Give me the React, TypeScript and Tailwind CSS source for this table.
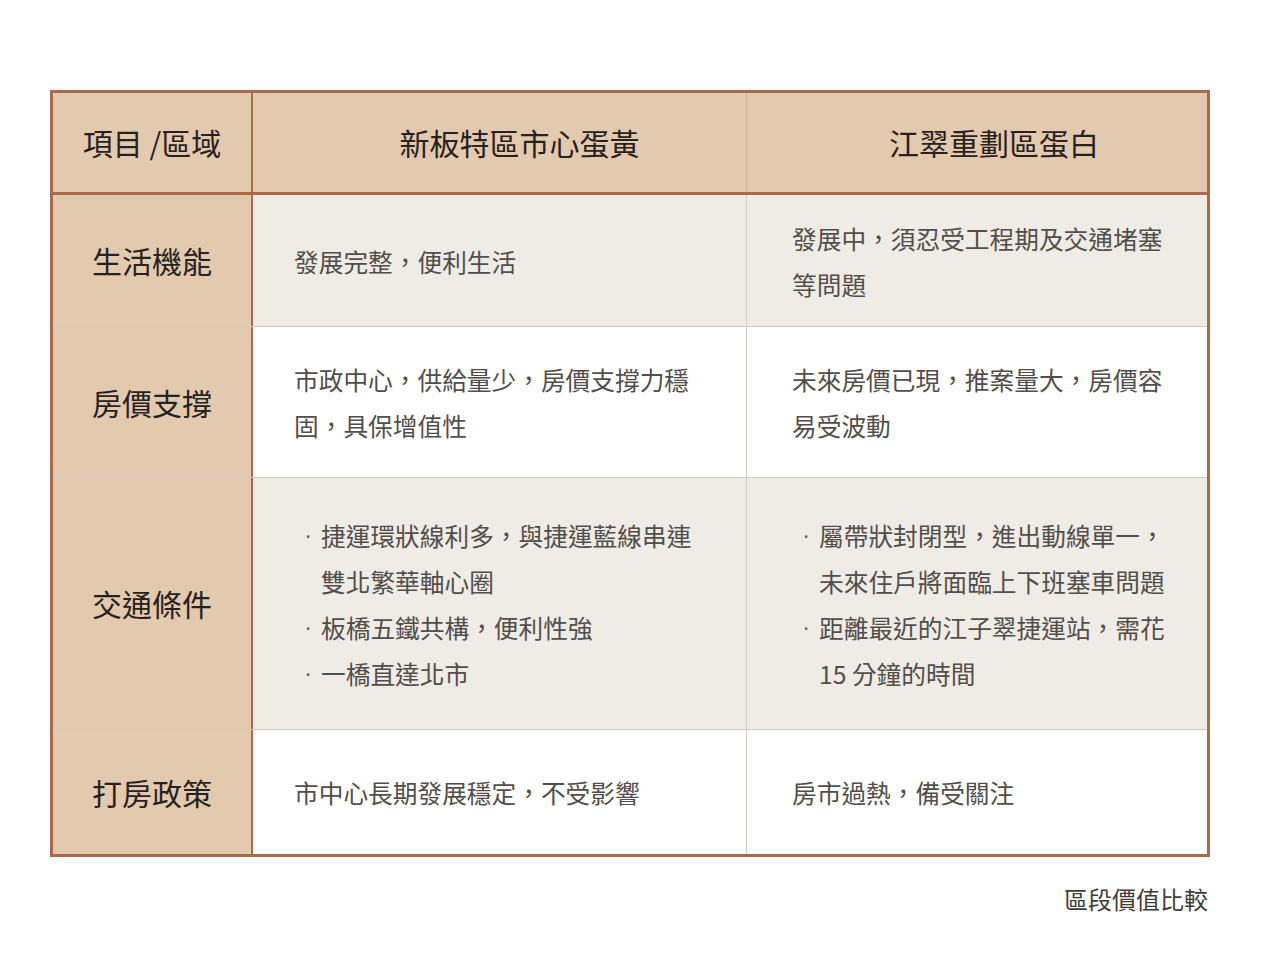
import React from "react";

const font = { fontFamily: '"Noto Sans CJK TC", "Noto Sans", sans-serif' };

function Bullets({ items }: { items: string[][] }) {
  return (
    <div className="flex flex-col">
      {items.map((lines, i) => (
        <div key={i} className="flex">
          <span className="w-[27px] pl-[10px] shrink-0 text-[#666] [font-family:'Liberation_Sans',sans-serif]">·</span>
          <div className="flex flex-col">
            {lines.map((l, j) => (
              <span key={j} className="whitespace-nowrap">{l}</span>
            ))}
          </div>
        </div>
      ))}
    </div>
  );
}

function Lines({ lines }: { lines: string[] }) {
  return (
    <div className="flex flex-col">
      {lines.map((l, j) => (
        <span key={j} className="whitespace-nowrap">{l}</span>
      ))}
    </div>
  );
}

export default function App() {
  const rows: { label: string; h: string; bg: string; a: React.ReactNode; b: React.ReactNode; last?: boolean }[] = [
    {
      label: "生活機能",
      h: "h-[132px]",
      bg: "bg-[#efebe5]",
      a: <Lines lines={["發展完整，便利生活"]} />,
      b: <Lines lines={["發展中，須忍受工程期及交通堵塞", "等問題"]} />,
    },
    {
      label: "房價支撐",
      h: "h-[151px]",
      bg: "bg-white",
      a: <Lines lines={["市政中心，供給量少，房價支撐力穩", "固，具保增值性"]} />,
      b: <Lines lines={["未來房價已現，推案量大，房價容", "易受波動"]} />,
    },
    {
      label: "交通條件",
      h: "h-[252px]",
      bg: "bg-[#efebe5]",
      a: (
        <Bullets
          items={[
            ["捷運環狀線利多，與捷運藍線串連", "雙北繁華軸心圈"],
            ["板橋五鐵共構，便利性強"],
            ["一橋直達北市"],
          ]}
        />
      ),
      b: (
        <Bullets
          items={[
            ["屬帶狀封閉型，進出動線單一，", "未來住戶將面臨上下班塞車問題"],
            ["距離最近的江子翠捷運站，需花", "15 分鐘的時間"],
          ]}
        />
      ),
    },
    {
      label: "打房政策",
      h: "h-[124px]",
      bg: "bg-white",
      a: <Lines lines={["市中心長期發展穩定，不受影響"]} />,
      b: <Lines lines={["房市過熱，備受關注"]} />,
      last: true,
    },
  ];

  return (
    <div className="w-[1280px] h-[960px] bg-white pt-[90px] pl-[50px]" style={font}>
      <div className="w-[1160px] border-[3px] border-[#a96a4b]">
        <div className="flex h-[102px] bg-[#e3c9ad] border-b-[3px] border-[#a96a4b] text-[30px] font-normal text-[#262220]">
          <div className="w-[200px] border-r-[2px] border-[#a96a4b] flex items-center justify-center">
            項目 /區域
          </div>
          <div className="w-[494px] border-r-[1px] border-[#c9b09a] flex items-center justify-center pl-[40px]">
            新板特區市心蛋黃
          </div>
          <div className="flex-1 flex items-center justify-center pl-[34px]">江翠重劃區蛋白</div>
        </div>
        {rows.map((r, i) => (
          <div
            key={i}
            className={`flex ${r.h} ${r.last ? "" : "border-b border-[#cfcac4]"}`}
          >
            <div className="w-[200px] bg-[#e3c9ad] border-r-[2px] border-[#a96a4b] flex items-center justify-center text-[30px] font-normal text-[#262220]">
              {r.label}
            </div>
            <div
              className={`w-[494px] ${r.bg} border-r border-[#d2cdc7] flex items-center pl-[41px] text-[24.7px] leading-[46px] text-[#524e4b]`}
            >
              {r.a}
            </div>
            <div
              className={`flex-1 ${r.bg} flex items-center pl-[45px] text-[24.7px] leading-[46px] text-[#524e4b]`}
            >
              {r.b}
            </div>
          </div>
        ))}
      </div>
      <div className="w-[1158px] text-right mt-[24px] text-[24px] text-[#3f3d3b]">區段價值比較</div>
    </div>
  );
}
